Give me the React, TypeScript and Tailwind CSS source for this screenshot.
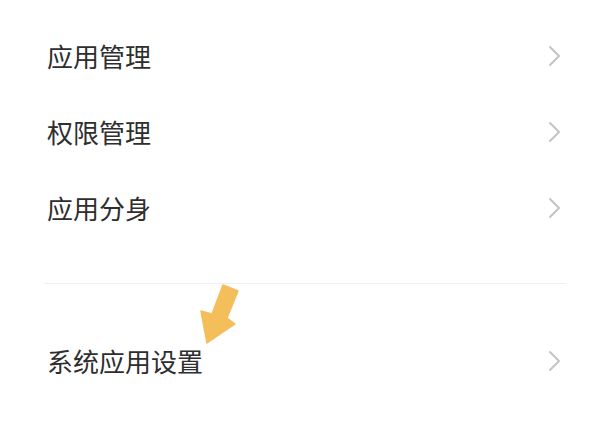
import React from "react"

const font = '"Noto Sans CJK SC", "Noto Sans", sans-serif'

function Chevron() {
    return (
        <svg width="16" height="22" viewBox="0 0 16 22" fill="none">
            <path d="M3 2 L12 11 L3 20" stroke="#c4c4c4" strokeWidth="2" strokeLinecap="round" strokeLinejoin="round" />
        </svg>
    )
}

function Row({ label }: { label: string }) {
    return (
        <div className="flex h-[76px] items-center justify-between pl-[47px] pr-[37px]">
            <span className="text-[26px] leading-none text-[#2e2e2e]" style={{ fontFamily: font }}>{label}</span>
            <Chevron />
        </div>
    )
}

export default function App() {
    return (
        <div className="relative h-[423px] w-[600px] overflow-hidden bg-white">
            <div className="flex flex-col pt-[18px]">
                <Row label="应用管理" />
                <Row label="权限管理" />
                <Row label="应用分身" />
                <div className="mt-[37px] mb-[39px] ml-[44px] mr-[34px] h-px bg-[#f0f0f0]" />
                <Row label="系统应用设置" />
            </div>
            {/* yellow pointer arrow */}
            <svg className="absolute left-0 top-0" width="600" height="423" viewBox="0 0 600 423">
                <polygon
                    points="223,285 238,291 227,318 235,324 207,343 201,311 212,314"
                    fill="#f4bf5a"
                    stroke="#f4bf5a"
                    strokeWidth="1.5"
                    strokeLinejoin="round"
                />
            </svg>
        </div>
    )
}
